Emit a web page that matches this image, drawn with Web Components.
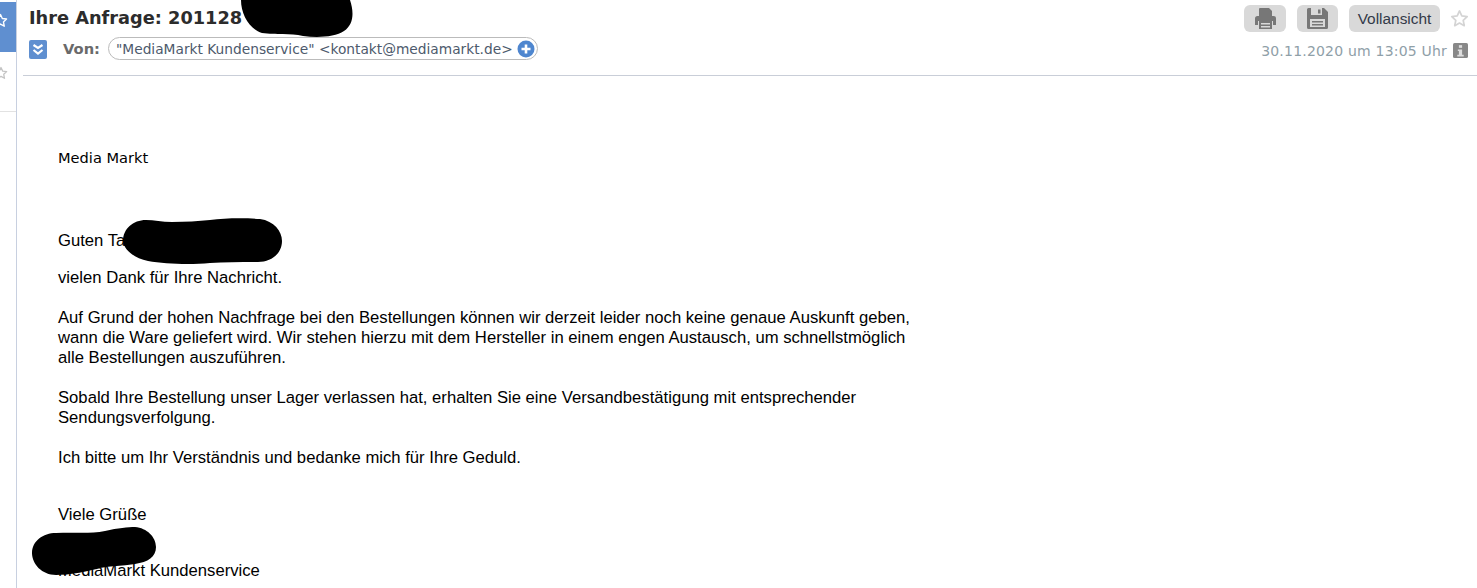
<!DOCTYPE html>
<html lang="de"><head><meta charset="utf-8"><title>Ihre Anfrage</title>
<style>html,body{margin:0;height:100%;overflow:hidden;background:#fff}body{width:1477px;height:588px}</style>
</head><body>
<mail-view>
<mail-rail slot="rail"></mail-rail>
<mail-header slot="header"></mail-header>
<mail-body slot="body"></mail-body>
<mail-redactions slot="over"></mail-redactions>
</mail-view>
<script>
const def=(n,html)=>customElements.define(n,class extends HTMLElement{constructor(){super();this.attachShadow({mode:'open'}).innerHTML=html}});
const star=(c,w)=>`<svg width="${w}" height="${w}" viewBox="0 0 24 24"><path d="M12 2.500l2.900 6.300 6.800.8-5 4.700 1.300 6.800-6-3.400-6 3.400 1.300-6.800-5-4.700 6.800-.8z" fill="none" stroke="${c}" stroke-width="2.200" stroke-linejoin="round"/></svg>`;
def('mail-view',`<style>:host{display:grid;grid-template-columns:17px 1fr;width:1477px;height:588px;position:relative;overflow:hidden}</style><slot name="rail"></slot><div style="min-width:0"><slot name="header"></slot><slot name="body"></slot></div><slot name="over"></slot>`);
def('mail-redactions',`<style>:host{position:absolute;left:0;top:0;width:1477px;height:588px;pointer-events:none}svg{display:block}</style>
<svg width="1477" height="588" viewBox="0 0 1477 588"><g fill="#000">
<path d="M241 0H350C354 12 354 24 344 31C335 37 318 38 303 36C290 33 276 35 262 33C249 29 241 14 241 0Z"/>
<path d="M146 220C154 220 162 222 172 222C186 222 198 221 210 220C225 218 245 218 260 219C274 221 282 231 282 241C282 253 272 262 258 262C240 262 225 262 210 263C190 265 165 264 148 261C134 258 124 250 123 241C123 229 133 220 146 220Z"/>
<path d="M56 533C75 532 90 534 105 531C118 528 128 527 135 527C147 528 156 537 156 547C156 557 148 562 135 564C122 566 110 566 100 568C85 572 70 575 56 575C42 575 32 564 32 553C32 541 43 533 56 533Z"/>
</g></svg>`);
def('mail-rail',`<style>:host{display:block;border-right:1px solid #c8d0e0;box-sizing:border-box;height:588px}
.a{height:50px;margin-top:2px;width:16px;background:#5f8fd0;overflow:hidden;display:flex;align-items:flex-start}
.a svg{margin:11px 0 0 -7px}
.b{height:59px;border-bottom:1px solid #e2e2e2;overflow:hidden}.b svg{margin:14px 0 0 -6px}</style>
<div class="a">${star('#fff',15)}</div><div class="b">${star('#c4c4c4',14)}</div>`);
def('mail-header',`<style>:host{display:block;font-family:"DejaVu Sans",Verdana,sans-serif;margin-left:6px;height:75px;border-bottom:1px solid #c9ced8}
.row{display:flex;align-items:center}
.one{height:37px;padding-left:6px;padding-right:8px}
h1{margin:0 0 2px;font-size:17.75px;font-weight:bold;color:#2c2c2c;flex:1;white-space:nowrap}
.btn{background:#d9d9d9;border-radius:6px;height:27px;display:flex;align-items:center;justify-content:center;margin-right:11px}
.two{height:25px;padding-left:6px;padding-right:9px}
.tog{width:18px;height:19px;background:#5f8fd0;border-radius:2px;display:flex;align-items:center;justify-content:center}
.von{font-weight:bold;font-size:14.7px;color:#6a6a6a;margin:0 8px 2px 16px}
.pill{display:flex;align-items:center;height:23px;box-sizing:border-box;border:1px solid #bbb;border-radius:12px;padding:0 2px 0 7px;margin-bottom:2px;font-size:13.75px;color:#4d5a6c;white-space:nowrap;gap:4px}
.date{margin-left:auto;font-size:14px;color:#8fa0a8;display:flex;align-items:center;gap:6px;letter-spacing:.2px;position:relative;top:1px}
</style>
<div class="row one"><h1>Ihre Anfrage: 201128</h1>
<div class="btn" style="width:42px"><svg width="21" height="21" viewBox="0 0 21 21" fill="#777"><path d="M5 0h9l3 3v5H4V1a1 1 0 0 1 1-1z"/><path d="M2.500 8h16A2.500 2.500 0 0 1 21 10.500V17h-3v-4H3v4H0v-6.500A2.500 2.500 0 0 1 2.500 8z"/><path fill-rule="evenodd" d="M4 13h13v8H4zM6 15v1.500h9V15zM6 18v1.500h9V18z"/></svg></div>
<div class="btn" style="width:41px"><svg width="21" height="21" viewBox="0 0 21 21"><path fill="#777" d="M1.500 0H17l4 4v15.500a1.500 1.500 0 0 1-1.500 1.500h-18A1.500 1.500 0 0 1 0 19.500V1.500A1.500 1.500 0 0 1 1.500 0z"/><path fill="#d9d9d9" d="M4 0h11v7H4zM3 11h15v8H3z"/><path fill="#777" d="M11 1.500h2.500v4H11zM5 13h11v1.500H5zM5 16h11v1.500H5z"/></svg></div>
<div class="btn" style="width:91px;font:15.4px 'Liberation Sans',Arial,sans-serif;color:#333a48;margin-right:10px">Vollansicht</div>
${star('#d4d4d4',19)}
</div>
<div class="row two"><div class="tog"><svg width="12" height="13" viewBox="0 0 12 13" fill="none" stroke="#fff" stroke-width="2.200"><path d="M1.500 2l4.500 3 4.500-3M1.500 7l4.500 3.500L10.500 7"/></svg></div>
<span class="von">Von:</span>
<div class="pill"><span>"MediaMarkt Kundenservice" &lt;kontakt@mediamarkt.de&gt;</span><svg width="18" height="18" viewBox="0 0 18 18"><circle cx="9" cy="9" r="8.500" fill="#4e86cf"/><path d="M9 4.500v9M4.500 9h9" stroke="#fff" stroke-width="2.600"/></svg></div>
<div class="date">30.11.2020 um 13:05 Uhr <svg width="15" height="15" viewBox="0 0 14 14"><rect width="14" height="14" rx="1.500" fill="#888"/><rect x="5.500" y="2" width="3" height="2.500" fill="#ddd"/><path d="M4.500 6h4v5h1.500v1.500H4V11h1.500V7.500h-1z" fill="#ddd"/></svg></div></div>`);
def('mail-body',`<style>:host{display:block;padding:72px 0 0 41px;font:16.67px/20px "Liberation Sans",Arial,sans-serif;color:#000;height:400px}
.mm{font:14.6px/20px "DejaVu Sans",Verdana,sans-serif;margin-bottom:63px}
p{margin:0 0 20px;width:900px;white-space:nowrap}.tight{margin-bottom:17px}</style>
<div class="mm">Media Markt</div>
<p class="tight">Guten Tag</p>
<p>vielen Dank für Ihre Nachricht.</p>
<p>Auf Grund der hohen Nachfrage bei den Bestellungen können wir derzeit leider noch keine genaue Auskunft geben,<br>wann die Ware geliefert wird. Wir stehen hierzu mit dem Hersteller in einem engen Austausch, um schnellstmöglich<br>alle Bestellungen auszuführen.</p>
<p>Sobald Ihre Bestellung unser Lager verlassen hat, erhalten Sie eine Versandbestätigung mit entsprechender<br>Sendungsverfolgung.</p>
<p>Ich bitte um Ihr Verständnis und bedanke mich für Ihre Geduld.</p>
<p style="margin:37px 0 36px">Viele Grüße</p>
<p>MediaMarkt Kundenservice</p>`);
</script></body></html>
